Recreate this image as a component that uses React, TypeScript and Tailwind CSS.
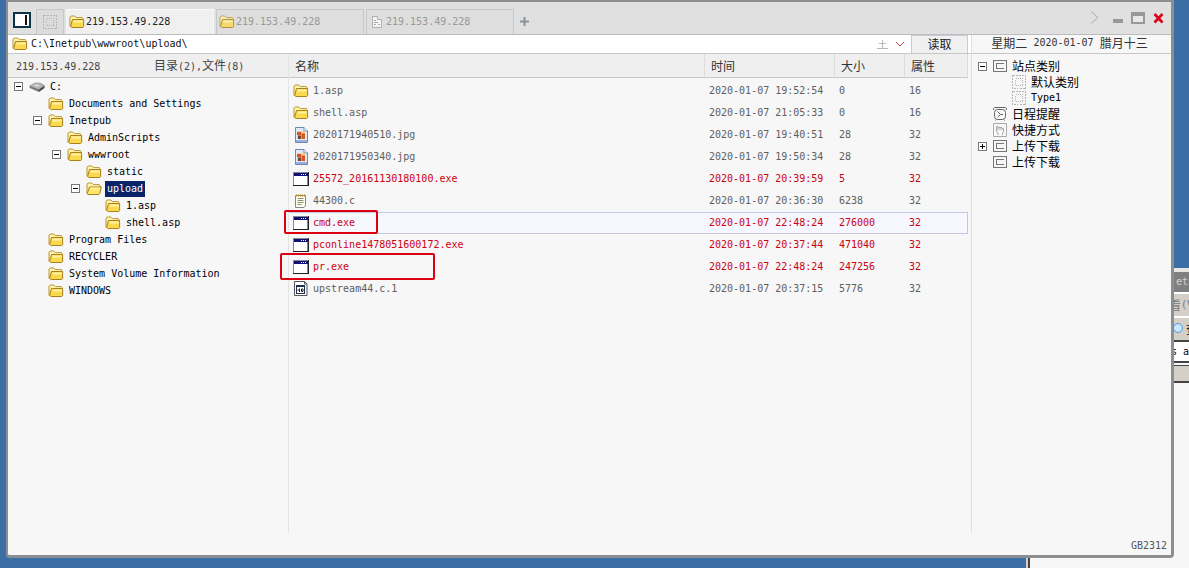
import type { ReactNode } from 'react';

const latin = "font-['DejaVu_Sans_Mono','Liberation_Mono',monospace] text-[10px]";
const cjk = "font-['Noto_Sans_CJK_SC',sans-serif] text-xs";

function Mono({ children }: { children: ReactNode }) {
  return <span className={latin}>{children}</span>;
}

function FolderIcon({ faded = false, open = false }: { faded?: boolean; open?: boolean }) {
  return (
    <svg className={faded ? 'h-[14px] w-4 shrink-0 opacity-80' : 'h-[14px] w-4 shrink-0'} viewBox="0 0 16 14">
      <path d="M1 11.5V2.2L2.2 1h3.6l1.6 1.6h5.8l.8.8v2" fill="#fff3b0" stroke="#b8952f" />
      {open ? (
        <path d="M1.2 11.8 3.5 5H15.4L13.6 11.8l-.7.7H1.8z" fill="#ffe66b" stroke="#a8801c" />
      ) : (
        <path d="M3.5 4.500H14.600V11.7l-.8.8H3.2L1.6 11.500z" fill="#fbd94f" stroke="#a8801c" />
      )}
      <path d="M4.5 5.5H13.8V7.5H4.5z" fill="#fff0a0" />
    </svg>
  );
}

function DriveIcon() {
  return (
    <svg className="h-[14px] w-4 shrink-0" viewBox="0 0 16 14">
      <path d="M.5 6 6 3h5l4.5 2.5L10 9.500z" fill="#b4b4b4" stroke="#8a8a8a" strokeWidth=".6" />
      <path d="M.5 6 10 9.500V12L.8 8z" fill="#777" />
      <path d="M10 9.500 15.500 5.500V8L10 12z" fill="#4a4a4a" />
      <path d="M4 5.600 7.500 4.200 11 5.400 8 7z" fill="#d8d8d8" />
    </svg>
  );
}

function ImageFileIcon() {
  return (
    <svg className="h-4 w-4 shrink-0" viewBox="0 0 16 16">
      <path d="M2.500.5h8.500l3.500 3.500v11.500h-12z" fill="#dfeafa" stroke="#6c87b8" />
      <path d="M11 .5V4h3.500" fill="#fff" stroke="#6c87b8" />
      <rect x="4" y="4" width="8" height="8" fill="#f7c8a0" />
      <path d="M4 5h4v3H4zM8.500 6.500H12V12H8.500z" fill="#d9541e" />
      <path d="M5 8.500h3V12H5z" fill="#6b4a3c" />
      <path d="M3 14h11" stroke="#5674ac" />
    </svg>
  );
}

function ExeIcon() {
  return (
    <svg className="h-4 w-4 shrink-0" viewBox="0 0 16 16" shapeRendering="crispEdges">
      <rect x="0" y="1" width="16" height="14" fill="#222" />
      <rect x="0" y="1" width="15" height="13" fill="#888" />
      <rect x="1" y="5" width="13" height="9" fill="#fff" />
      <rect x="1" y="2" width="14" height="3" fill="#10107c" />
      <path d="M8 3h1v1H8zM10 3h1v1h-1zM12 3h1v1h-1z" fill="#fff" />
    </svg>
  );
}

function NoteIcon() {
  return (
    <svg className="h-4 w-4 shrink-0" viewBox="0 0 16 16">
      <path d="M2.500 2.500h10v10l-1.500 2H2.500z" fill="#fffde8" stroke="#7d8a90" />
      <path d="M3 2.500h9" stroke="#a8842c" strokeWidth="2" strokeDasharray="1 1" />
      <path d="M4.500 5.500h6M4.500 7.500h6M4.500 9.500h6M4.500 11.500h4" stroke="#8b9478" />
    </svg>
  );
}

function UnknownFileIcon() {
  return (
    <svg className="h-4 w-4 shrink-0" viewBox="0 0 16 16">
      <path d="M1.500.500h10l2.500 2.500v11.500H1.500z" fill="#fff" stroke="#555" />
      <path d="M11.500.500V3H14" fill="none" stroke="#555" />
      <path d="M3 4h9v9H3z" fill="#222c58" />
      <path d="M4 6h7v6H4z" fill="#fff" />
      <path d="M4.500 9h2.500M6.500 7.500v3.500M8.500 8h1.500v2.500H8.500z" fill="none" stroke="#222" />
    </svg>
  );
}

function PageIcon() {
  return (
    <svg className="h-[14px] w-3 shrink-0" viewBox="0 0 12 14">
      <path d="M1.500 1.500h5v3h4v8h-9z" fill="#f4f4f4" stroke="#b0b0b0" />
      <path d="M3 5.500h2M3 7.500h4M3 9.500h2M7 9.500h2" stroke="#a8a8a8" />
    </svg>
  );
}

function FrameIcon() {
  return (
    <svg className="h-[14px] w-[14px] shrink-0" viewBox="0 0 14 14" fill="none" stroke="#777" shapeRendering="crispEdges">
      <path d="M.5 1.500h13v11H.5z" />
      <path d="M11 4.500H3.500v5H11" />
    </svg>
  );
}

function DottedIcon() {
  return (
    <svg className="h-[14px] w-[14px] shrink-0" viewBox="0 0 14 14" fill="none" stroke="#b5b5b5" shapeRendering="crispEdges">
      <path d="M.5.500h13v13H.5z" strokeDasharray="2 1" />
      <path d="M3.500 3.500h7v7h-7z" strokeDasharray="1 1" />
    </svg>
  );
}

function ClockIcon() {
  return (
    <svg className="h-[14px] w-[14px] shrink-0" viewBox="0 0 14 14" fill="none" stroke="#666">
      <path d="M.5 3V1.500l1-1h11l1 1V3" />
      <rect x="1.500" y="2.500" width="11" height="10" rx="3" />
      <path d="m4.500 4.500 3 3-3 2.500M7.500 7.500H10M2.500 13.500l1-1M11.500 13.500l-1-1" />
    </svg>
  );
}

function HandIcon() {
  return (
    <svg className="h-[14px] w-[14px] shrink-0" viewBox="0 0 14 14" fill="none" stroke="#aaa">
      <path d="M.5.500h13v13H.5z" />
      <path d="M5 12V10L3.500 8V3.500H5V7M5 4.500h2V7M7 4.500h2V7M9 5.500h1.500V9L9.500 10v2" />
    </svg>
  );
}

type Node = { label: string; icon: ReactNode; sign?: '+' | '-'; selected?: boolean; wide?: boolean; children?: Node[] };

const folder = <FolderIcon />;

const directories: Node[] = [
  {
    label: 'C:',
    icon: <DriveIcon />,
    sign: '-',
    children: [
      { label: 'Documents and Settings', icon: folder },
      {
        label: 'Inetpub',
        icon: folder,
        sign: '-',
        children: [
          { label: 'AdminScripts', icon: folder },
          {
            label: 'wwwroot',
            icon: folder,
            sign: '-',
            children: [
              { label: 'static', icon: folder },
              {
                label: 'upload',
                icon: <FolderIcon open />,
                sign: '-',
                selected: true,
                children: [
                  { label: '1.asp', icon: folder },
                  { label: 'shell.asp', icon: folder },
                ],
              },
            ],
          },
        ],
      },
      { label: 'Program Files', icon: folder },
      { label: 'RECYCLER', icon: folder },
      { label: 'System Volume Information', icon: folder },
      { label: 'WINDOWS', icon: folder },
    ],
  },
];

const categories: Node[] = [
  {
    label: '站点类别',
    icon: <FrameIcon />,
    sign: '-',
    wide: true,
    children: [
      { label: '默认类别', icon: <DottedIcon />, wide: true },
      { label: 'Type1', icon: <DottedIcon /> },
    ],
  },
  { label: '日程提醒', icon: <ClockIcon />, wide: true },
  { label: '快捷方式', icon: <HandIcon />, wide: true },
  { label: '上传下载', icon: <FrameIcon />, sign: '+', wide: true },
  { label: '上传下载', icon: <FrameIcon />, wide: true },
];

function Toggle({ sign, label }: { sign: '+' | '-'; label: string }) {
  return (
    <button type="button" aria-label={label} aria-expanded={sign === '-'} className="h-[9px] w-[9px] shrink-0">
      <svg viewBox="0 0 9 9" className="block h-[9px] w-[9px]" fill="#fff" shapeRendering="crispEdges">
        <path d="M.5.500h8v8h-8z" stroke="#777" />
        <path d={sign === '-' ? 'M2 4.500h5' : 'M2 4.500h5M4.500 2v5'} stroke="#000" />
      </svg>
    </button>
  );
}

function Tree({ nodes, rowClass }: { nodes: Node[]; rowClass: string }) {
  return (
    <ul>
      {nodes.map((node, index) => (
        <li key={index}>
          <div className={rowClass}>
            {node.sign ? <Toggle sign={node.sign} label={node.label} /> : <span className="w-[9px] shrink-0" />}
            <span className="ml-1.5 mr-[3px] flex items-center">{node.icon}</span>
            <span
              className={
                node.selected
                  ? 'flex h-4 items-center whitespace-nowrap bg-[#0a246a] px-0.5 text-white'
                  : 'flex h-4 items-center whitespace-nowrap px-0.5'
              }
            >
              {node.wide ? node.label : <Mono>{node.label}</Mono>}
            </span>
          </div>
          {node.children && (
            <div className="pl-[19px]">
              <Tree nodes={node.children} rowClass={rowClass} />
            </div>
          )}
        </li>
      ))}
    </ul>
  );
}

type FileRow = {
  name: string;
  time: string;
  size: string;
  attr: string;
  icon: ReactNode;
  red?: boolean;
  current?: boolean;
  frame?: string;
};

const files: FileRow[] = [
  { name: '1.asp', time: '2020-01-07 19:52:54', size: '0', attr: '16', icon: folder },
  { name: 'shell.asp', time: '2020-01-07 21:05:33', size: '0', attr: '16', icon: folder },
  { name: '2020171940510.jpg', time: '2020-01-07 19:40:51', size: '28', attr: '32', icon: <ImageFileIcon /> },
  { name: '2020171950340.jpg', time: '2020-01-07 19:50:34', size: '28', attr: '32', icon: <ImageFileIcon /> },
  { name: '25572_20161130180100.exe', time: '2020-01-07 20:39:59', size: '5', attr: '32', icon: <ExeIcon />, red: true },
  { name: '44300.c', time: '2020-01-07 20:36:30', size: '6238', attr: '32', icon: <NoteIcon /> },
  {
    name: 'cmd.exe',
    time: '2020-01-07 22:48:24',
    size: '276000',
    attr: '32',
    icon: <ExeIcon />,
    red: true,
    current: true,
    frame: 'pointer-events-none absolute -left-[5px] -top-[3px] z-10 h-6 w-[94px] rounded-xs border-2 border-[#dc0010]',
  },
  { name: 'pconline1478051600172.exe', time: '2020-01-07 20:37:44', size: '471040', attr: '32', icon: <ExeIcon />, red: true },
  {
    name: 'pr.exe',
    time: '2020-01-07 22:48:24',
    size: '247256',
    attr: '32',
    icon: <ExeIcon />,
    red: true,
    frame: 'pointer-events-none absolute -left-[9px] -top-[3px] z-10 h-[27px] w-[155px] rounded-xs border-2 border-[#dc0010]',
  },
  { name: 'upstream44.c.1', time: '2020-01-07 20:37:15', size: '5776', attr: '32', icon: <UnknownFileIcon /> },
];

function FileTable() {
  return (
    <table className="w-full table-fixed border-separate border-spacing-0 text-left">
      <colgroup>
        <col />
        <col className="w-[130px]" />
        <col className="w-[70px]" />
        <col className="w-[63px]" />
      </colgroup>
      <thead>
        <tr className="h-6 bg-[#efefef] text-[#333]">
          {['名称', '时间', '大小', '属性'].map((title) => (
            <th key={title} className="border-b border-r border-b-[#c8c8c8] border-r-[#dcdcdc] p-0 pl-1.5 font-normal leading-4">
              {title}
            </th>
          ))}
        </tr>
        <tr className="h-0.5" />
      </thead>
      <tbody>
        {files.map((file) => {
          const edge = file.current ? 'border-y border-[#c4c8e0] bg-[#f6f7ff] p-0 leading-4' : 'p-0 leading-4';
          return (
            <tr key={file.name} className={file.red ? 'h-[22px] text-[#cc0010]' : 'h-[22px] text-[#606060]'}>
              <td className={`relative ${edge}`}>
                <span className="flex items-center gap-1 pl-1">
                  {file.icon}
                  <Mono>{file.name}</Mono>
                </span>
                {file.frame && <span className={file.frame} />}
              </td>
              <td className={edge}>
                <span className={`block pl-1 ${latin}`}>{file.time}</span>
              </td>
              <td className={edge}>
                <span className={`block pl-1 ${latin}`}>{file.size}</span>
              </td>
              <td className={file.current ? `border-r ${edge}` : edge}>
                <span className={`block pl-1 ${latin}`}>{file.attr}</span>
              </td>
            </tr>
          );
        })}
      </tbody>
    </table>
  );
}

function TitleBar() {
  const idle =
    'flex h-[25px] w-[148px] items-center gap-px border border-b-0 border-[#c4c8ca] bg-[#dedede] pl-0.5 text-[#999]';
  return (
    <header className="flex h-8 items-end bg-[#e0e0e0] pl-[5px]">
      <button type="button" aria-label="切换面板" className="mb-[5px] mr-[5px] h-[18px] w-[18px]">
        <svg viewBox="0 0 18 18" className="block h-[18px] w-[18px]" shapeRendering="crispEdges">
          <path d="M0 1h18v16H0z" fill="#073747" />
          <path d="M2 3h14v12H2z" fill="#fff" />
          <path d="M12 4h2v10h-2z" fill="#111" />
        </svg>
      </button>
      <button
        type="button"
        aria-label="主页"
        className="mr-0.5 flex h-[25px] w-7 items-center justify-center border border-b-0 border-[#c8c8c8] bg-[#dcdcdc]"
      >
        <DottedIcon />
      </button>
      <nav className="flex items-end gap-0.5">
        <button
          type="button"
          className="flex h-[25px] w-[148px] items-center gap-px border border-b-0 border-[#f8f8f8] bg-[#f0f0f0] pl-0.5 text-[#222]"
        >
          <FolderIcon />
          <Mono>219.153.49.228</Mono>
        </button>
        <button type="button" className={idle}>
          <FolderIcon faded />
          <Mono>219.153.49.228</Mono>
        </button>
        <button type="button" className={idle}>
          <span className="flex w-4 justify-center">
            <PageIcon />
          </span>
          <Mono>219.153.49.228</Mono>
        </button>
      </nav>
      <button type="button" aria-label="新建标签" className="mb-2 ml-1.5 h-[9px] w-[9px]">
        <svg viewBox="0 0 9 9" className="block h-[9px] w-[9px]" stroke="#8a9298" strokeWidth="2">
          <path d="M0 4.500h9M4.500 0v9" />
        </svg>
      </button>
      <div className="mb-[9px] ml-auto mr-[7px] flex items-center">
        <button type="button" aria-label="更多" className="mr-[13px] h-[15px] w-[10px]">
          <svg viewBox="0 0 10 15" className="block h-[15px] w-[10px]" fill="none" stroke="#aaa">
            <path d="M1 1.500 8 7.500 1 13.500" />
          </svg>
        </button>
        <button type="button" aria-label="最小化" className="mr-2 h-3 w-[10px]">
          <svg viewBox="0 0 10 12" className="block h-3 w-[10px]">
            <path d="M0 7h10v4H0z" fill="#999" />
          </svg>
        </button>
        <button type="button" aria-label="最大化" className="mr-2 h-3 w-[14px]">
          <svg viewBox="0 0 14 12" className="block h-3 w-[14px]">
            <path d="M0 0h14v12H0z" fill="#999" />
            <path d="M2 4h10v6H2z" fill="#e8e8e8" />
          </svg>
        </button>
        <button type="button" aria-label="关闭" className="h-3 w-[11px]">
          <svg viewBox="0 0 11 12" className="block h-3 w-[11px]" stroke="#e00016" strokeWidth="2.600">
            <path d="m1.500 2 8 8.500M9.500 2l-8 8.500" />
          </svg>
        </button>
      </div>
    </header>
  );
}

function AddressBar() {
  return (
    <form className="flex h-[19px] shrink-0 items-stretch border-b border-[#c8c8c8] bg-white" onSubmit={(e) => e.preventDefault()}>
      <label htmlFor="path" aria-label="路径" className="flex items-center pl-1">
        <FolderIcon />
      </label>
      <input
        id="path"
        defaultValue="C:\Inetpub\wwwroot\upload\"
        className={`min-w-0 flex-1 bg-transparent pl-[3px] text-[#111] outline-none ${latin}`}
      />
      <button type="button" aria-label="添加" className="flex w-[18px] items-center">
        <svg viewBox="0 0 11 11" className="h-[11px] w-[11px]" stroke="#b8b8b8" shapeRendering="crispEdges">
          <path d="M2 4.500h7M5.500 1v8M0 9.500h11" />
        </svg>
      </button>
      <button type="button" aria-label="展开" className="flex w-4 items-center">
        <svg viewBox="0 0 10 8" className="h-2 w-[10px]" fill="none" stroke="#d0404a">
          <path d="M1 2 5 6 9 2" />
        </svg>
      </button>
      <button
        type="submit"
        className="mr-[3px] flex w-[57px] items-center justify-center border-x border-t border-[#c8ccd0] bg-[#f0f0f0] pb-0.5 leading-4 text-[#222]"
      >
        读取
      </button>
    </form>
  );
}

function BackgroundWindow() {
  return (
    <div className="absolute bottom-0 right-0 top-[268px] flex w-[163px] flex-col overflow-hidden whitespace-nowrap border-l-2 border-[#d4d0c8] bg-[#f7f7f7] text-black">
      <div className="h-1 bg-[#e8e6e0]" />
      <div className="flex h-5 items-center bg-[#808080] pl-[148px] text-[#d4d0c8]">
        <Mono>et</Mono>
      </div>
      <div className="flex h-6 items-center border-t-2 border-white bg-[#d4d0c8] pl-[141px] text-[#777]">
        看<Mono>(V</Mono>
      </div>
      <div className="flex h-6 items-center gap-0.5 border-t-2 border-white bg-[#d4d0c8] pl-[144px]">
        <svg viewBox="0 0 12 12" className="h-3 w-3 shrink-0">
          <circle cx="6" cy="5" r="4.500" fill="#c8e8ff" stroke="#4a9cdc" />
        </svg>
        查
      </div>
      <div className="flex h-[23px] items-center border-y-2 border-[#444] bg-white pl-[143px]">
        <Mono>s a</Mono>
      </div>
      <div className="mt-0.5 h-[18px] border-b-2 border-t border-[#444] bg-[#d4d0c8]" />
      <div className="flex-1 border-l-2 border-[#504040]" />
    </div>
  );
}

export default function App() {
  return (
    <div className={`relative flex min-h-screen flex-col overflow-hidden bg-[#3a6ea5] leading-4 ${cjk}`}>
      <BackgroundWindow />
      <main className="relative mb-2.5 ml-1.5 mr-[15px] flex flex-1 flex-col rounded-b-sm border-b-[3px] border-l-2 border-r-[3px] border-t-2 border-[#8c8f92] bg-[#f7f7f7]">
        <TitleBar />
        <div className="flex flex-1 border-t border-[#bcbcbc]">
          <section className="flex min-w-0 flex-1 flex-col">
            <AddressBar />
            <div className="flex flex-1">
              <aside className="w-[281px] shrink-0 border-r border-[#e4e4e4]">
                <div className="flex h-6 items-center border-b border-[#c8c8c8] bg-[#efefef] pl-2 text-[#444]">
                  <span className="w-[138px]">
                    <Mono>219.153.49.228</Mono>
                  </span>
                  <span>
                    目录<Mono>(2),</Mono>文件<Mono>(8)</Mono>
                  </span>
                </div>
                <div className="pl-1.5 text-black">
                  <Tree nodes={directories} rowClass="flex h-[17px] items-center" />
                </div>
              </aside>
              <div className="min-w-0 flex-1 pr-[3px]">
                <FileTable />
              </div>
            </div>
          </section>
          <aside className="w-[200px] shrink-0 border-l border-[#e0e0e0]">
            <p className="mb-1 flex h-[19px] items-center justify-center whitespace-pre border-b border-[#c8c8c8] pb-0.5 pr-1 text-[#333]">
              星期二<Mono> 2020-01-07 </Mono>腊月十三
            </p>
            <div className="pl-1.5 text-black">
              <Tree nodes={categories} rowClass="flex h-4 items-center" />
            </div>
          </aside>
        </div>
        <footer className="flex h-[22px] items-center justify-end pr-1 pt-1 text-[#555]">
          <Mono>GB2312</Mono>
        </footer>
      </main>
    </div>
  );
}
